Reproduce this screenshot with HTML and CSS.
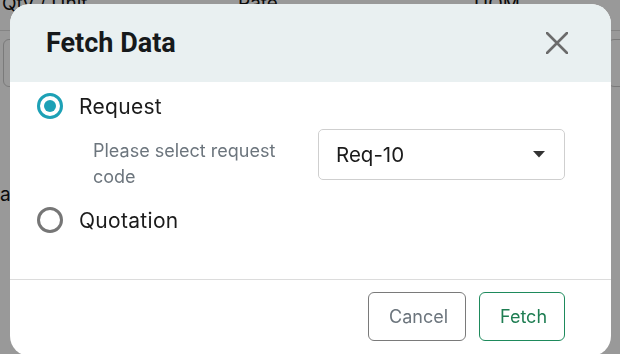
FILE: index.html
```html
<!DOCTYPE html>
<html lang="en">
<head>
  <meta charset="UTF-8" />
  <meta name="viewport" content="width=device-width, initial-scale=1" />
  <title>Fetch Data</title>
  <link rel="stylesheet" href="styles.css">
</head>
<body>
  <div class="page">
    <div class="page-head">
      <span class="col col-qty">Qty / Unit</span>
      <span class="col col-rate">Rate</span>
      <span class="col col-uom">UOM</span>
    </div>
    <div class="page-row">
      <div class="field field-left"></div>
      <div class="field field-right"></div>
    </div>
    <p class="page-text">a</p>
  </div>

  <div class="backdrop"></div>

  <div class="modal">
    <header class="modal-header">
      <h2>Fetch Data</h2>
      <button class="close" aria-label="Close">
        <svg width="22" height="22" viewBox="0 0 22 22"><path d="M1 1 L21 21 M21 1 L1 21" stroke="#6b6b6b" stroke-width="2.6" stroke-linecap="round"/></svg>
      </button>
    </header>
    <div class="modal-body">
      <label class="option">
        <span class="radio checked"></span>
        <span>Request</span>
      </label>
      <div class="request-row">
        <p class="hint">Please select request code</p>
        <div class="select">
          <span>Req-10</span>
          <svg width="12" height="7" viewBox="0 0 12 7"><path d="M0 0 H12 L6 6.5 Z" fill="#333"/></svg>
        </div>
      </div>
      <label class="option option-quote">
        <span class="radio"></span>
        <span>Quotation</span>
      </label>
    </div>
    <footer class="modal-footer">
      <button class="btn btn-cancel">Cancel</button>
      <button class="btn btn-fetch">Fetch</button>
    </footer>
  </div>
</body>
</html>
```

FILE: styles.css
```css
body {
  margin: 0;
  font-family: Inter, "Noto Sans", sans-serif;
  background: #fff;
  overflow: hidden;
}
.page {
  height: 354px;
  color: #111;
}
.page-head {
  height: 30px;
  border-bottom: 1px solid #ddd;
  position: relative;
  font-size: 19px;
}
.col {
  position: absolute;
  top: -8px;
}
.col-qty { left: 2px; }
.col-rate { left: 238px; }
.col-uom { left: 474px; }
.page-row {
  display: flex;
  justify-content: space-between;
  padding: 8px 0 0 3px;
}
.field {
  height: 46px;
  border: 1px solid #ccc;
  border-radius: 6px;
}
.field-left { width: 40px; }
.field-right { width: 40px; margin-right: -30px; }
.page-text {
  margin: 96px 0 0 0;
  font-size: 19px;
}
.backdrop {
  position: fixed;
  inset: 0;
  background: rgba(0, 0, 0, 0.4);
}
.modal {
  position: fixed;
  left: 10px;
  top: 4px;
  width: 601px;
  height: 352px;
  background: #fff;
  border-radius: 20px;
  overflow: hidden;
  display: flex;
  flex-direction: column;
}
.modal-header {
  height: 78px;
  background: #e9f0f1;
  display: flex;
  align-items: center;
  justify-content: space-between;
  padding: 0 43px 0 36px;
}
.modal-header h2 {
  margin: 0;
  font-family: Roboto, sans-serif;
  font-weight: 700;
  font-size: 27px;
  color: #16191b;
}
.close {
  background: none;
  border: none;
  padding: 0;
  display: flex;
  cursor: pointer;
}
.modal-body {
  padding: 11px 27px 46px;
  color: #1b1b1b;
}
.option {
  display: flex;
  align-items: center;
  gap: 16px;
  font-size: 21px;
  letter-spacing: 0.3px;
  height: 26px;
}
.radio {
  width: 26px;
  height: 26px;
  box-sizing: border-box;
  border: 3px solid #767676;
  border-radius: 50%;
  display: flex;
  align-items: center;
  justify-content: center;
}
.radio.checked {
  border-color: #1da1b6;
}
.radio.checked::after {
  content: "";
  width: 12px;
  height: 12px;
  border-radius: 50%;
  background: #1da1b6;
}
.request-row {
  display: flex;
  gap: 25px;
  margin-top: 10px;
  padding-left: 56px;
}
.hint {
  width: 200px;
  margin: 0;
  padding-top: 9px;
  font-size: 18px;
  line-height: 26px;
  color: #6c757d;
}
.select {
  width: 247px;
  height: 51px;
  box-sizing: border-box;
  border: 1px solid #cfcfcf;
  border-radius: 5px;
  display: flex;
  align-items: center;
  justify-content: space-between;
  padding: 0 19px 0 17px;
  font-size: 20.5px;
}
.option-quote {
  margin-top: 17px;
}
.modal-footer {
  border-top: 1px solid #dcdcdc;
  display: flex;
  justify-content: flex-end;
  gap: 13px;
  padding: 12px 46px 0 0;
}
.btn {
  height: 49px;
  padding: 0 20px;
  background: #fff;
  border-radius: 6px;
  font-family: Inter, sans-serif;
  font-size: 18px;
  cursor: pointer;
}
.btn-cancel {
  width: 98px;
  border: 1.5px solid #7a7a7a;
  color: #6c757d;
}
.btn-fetch {
  width: 86px;
  border: 1.5px solid #1e8a5c;
  color: #1e7d52;
}
```
